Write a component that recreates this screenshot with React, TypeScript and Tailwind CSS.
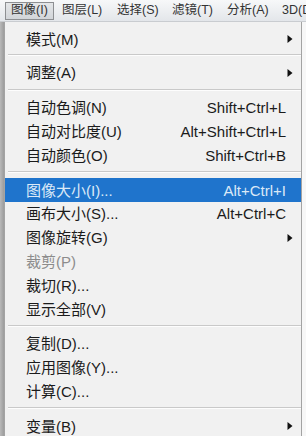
type MenuItem =
  | { kind: "sep" }
  | {
      kind: "item";
      label: string;
      shortcut?: string;
      submenu?: boolean;
      disabled?: boolean;
      active?: boolean;
      first?: boolean;
    };

const menuBar = ["图像(I)", "图层(L)", "选择(S)", "滤镜(T)", "分析(A)", "3D(D)"];

const items: MenuItem[] = [
  { kind: "item", label: "模式(M)", submenu: true, first: true },
  { kind: "sep" },
  { kind: "item", label: "调整(A)", submenu: true },
  { kind: "sep" },
  { kind: "item", label: "自动色调(N)", shortcut: "Shift+Ctrl+L" },
  { kind: "item", label: "自动对比度(U)", shortcut: "Alt+Shift+Ctrl+L" },
  { kind: "item", label: "自动颜色(O)", shortcut: "Shift+Ctrl+B" },
  { kind: "sep" },
  { kind: "item", label: "图像大小(I)...", shortcut: "Alt+Ctrl+I", active: true },
  { kind: "item", label: "画布大小(S)...", shortcut: "Alt+Ctrl+C" },
  { kind: "item", label: "图像旋转(G)", submenu: true },
  { kind: "item", label: "裁剪(P)", disabled: true },
  { kind: "item", label: "裁切(R)..." },
  { kind: "item", label: "显示全部(V)" },
  { kind: "sep" },
  { kind: "item", label: "复制(D)..." },
  { kind: "item", label: "应用图像(Y)..." },
  { kind: "item", label: "计算(C)..." },
  { kind: "sep" },
  { kind: "item", label: "变量(B)", submenu: true },
];

/**
 * 子菜单箭头
 */
function Arrow() {
  return (
    <svg width="6" height="9" viewBox="0 0 6 9" className="absolute right-[8px] top-1/2 -translate-y-1/2">
      <path d="M0.5 0.5 L5.5 4.5 L0.5 8.5 Z" fill="#111" />
    </svg>
  );
}

function Row({ item }: { item: Extract<MenuItem, { kind: "item" }> }) {
  const color = item.active
    ? "text-[#dbe9f7] bg-[#1f74cc]"
    : item.disabled
      ? "text-[#8c8c8c]"
      : "text-[#1b1b1b]";
  return (
    <div
      className={`relative flex items-center justify-between pl-[21px] pr-[15px] ${
        item.first ? "h-[22px]" : "h-[23.8px]"
      } ${color}`}
    >
      <span>{item.label}</span>
      {item.shortcut && <span>{item.shortcut}</span>}
      {item.submenu && <Arrow />}
    </div>
  );
}

function Separator() {
  return (
    <div className="pb-[5px] pl-[3px] pt-[4px]">
      <div className="h-px bg-[#c9c9c9]" />
      <div className="h-px bg-[#fdfdfd]" />
    </div>
  );
}

export default function App() {
  return (
    <div
      className="relative h-[436px] w-[306px] overflow-hidden bg-[#f4f4f4] text-[15px] leading-none"
      style={{ fontFamily: '"Liberation Sans", "Noto Sans CJK SC", sans-serif' }}
    >
      {/* 菜单栏 */}
      <div className="flex h-[22px] items-center border-b border-[#c9ccd0] bg-gradient-to-b from-[#f7f8f9] to-[#e3e6ea] pl-[5px] text-[12.5px] text-[#333]">
        {menuBar.map((m, i) => (
          <div
            key={m}
            className={`flex h-[18px] shrink-0 items-center whitespace-nowrap pl-[5px] ${
              i === 0
                ? "mr-[3px] w-[49px] border border-[#8d8f92] bg-gradient-to-b from-[#e4e6e8] to-[#d2d5d9] pl-[4px]"
                : "w-[55px]"
            }`}
          >
            {m}
          </div>
        ))}
      </div>

      <div className="flex h-[414px]">
        {/* 左侧边 */}
        <div className="w-[4px] bg-gradient-to-r from-[#b9b9b9] to-[#9c9c9c]" />
        {/* 下拉菜单 */}
        <div className="w-[298px] border-x border-[#a3a3a3] bg-[#f1f1f1] pt-[6px]">
          {items.map((it, i) =>
            it.kind === "sep" ? <Separator key={i} /> : <Row key={i} item={it} />,
          )}
        </div>
        <div className="flex-1 bg-[#f7f7f7]" />
      </div>
    </div>
  );
}
